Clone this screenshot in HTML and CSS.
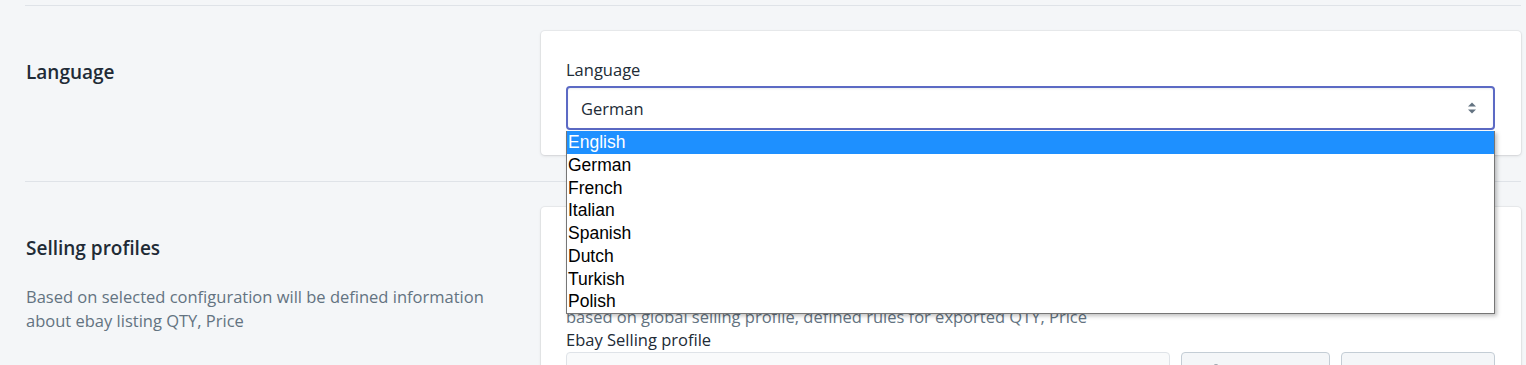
FILE: index.html
```html
<!DOCTYPE html>
<html lang="en">

<head>
    <meta charset="UTF-8">
    <meta name="viewport" content="width=device-width, initial-scale=1.0">
    <title>Settings</title>
    <link rel="stylesheet" href="styles.css">
</head>

<body>
    <div class="page">

        <section class="section">
            <div class="annotation">
                <h2>Language</h2>
            </div>
            <div class="card">
                <label class="field-label">Language</label>
                <div class="select focused">
                    <span>German</span>
                    <svg class="arrows" width="8" height="12" viewBox="0 0 8 12">
                        <path d="M0 4.5 L4 0.5 L8 4.5 Z M0 7.5 L8 7.5 L4 11.5 Z" fill="#637381" />
                    </svg>

                    <!-- open option list -->
                    <ul class="dropdown">
                        <li class="active">English</li>
                        <li>German</li>
                        <li>French</li>
                        <li>Italian</li>
                        <li>Spanish</li>
                        <li>Dutch</li>
                        <li>Turkish</li>
                        <li>Polish</li>
                    </ul>
                </div>
            </div>
        </section>

        <section class="section">
            <div class="annotation">
                <h2>Selling profiles</h2>
                <p class="description">Based on selected configuration will be defined information about ebay listing QTY, Price</p>
            </div>
            <div class="card">
                <label class="field-label">Selling profile type</label>
                <div class="select">
                    <span>Global selling profile</span>
                </div>
                <p class="help">based on global selling profile, defined rules for exported QTY, Price</p>
                <label class="field-label tight">Ebay Selling profile</label>
                <div class="input-row">
                    <div class="input"></div>
                    <button class="btn first">
                        <svg width="16" height="16" viewBox="0 0 16 16">
                            <circle cx="8" cy="5" r="3.5" fill="none" stroke="#454f5b" stroke-width="2" />
                            <path d="M2 15c0-3 3-5 6-5s6 2 6 5z" fill="#454f5b" />
                        </svg>
                        Change
                    </button>
                    <button class="btn second">
                        <svg width="16" height="16" viewBox="0 0 16 16">
                            <path d="M8 3v10M3 8h10" stroke="#919eab" stroke-width="2" />
                        </svg>
                        Create new
                    </button>
                </div>
            </div>
        </section>

    </div>
</body>

</html>
```

FILE: styles.css
```css
body {
    margin: 0;
    background: #f4f6f8;
    font-family: "Open Sans", "Noto Sans", sans-serif;
    font-size: 16.5px;
    color: #212b36;
}

.page {
    padding: 5px 5px 0 25px;
}

.section {
    display: grid;
    grid-template-columns: 496px 1fr;
    column-gap: 20px;
    border-top: 1px solid #dfe3e8;
    padding: 25px 0 26px;
}

/* Left side text */

.annotation {
    padding: 29px 0 0 1px;
}

.annotation h2 {
    margin: 0;
    font-size: 19px;
    font-weight: 600;
    line-height: 24px;
}

.description {
    margin: 25px 0 0;
    color: #637381;
    line-height: 24px;
}

/* Card */

.card {
    background: #fff;
    border-radius: 4px;
    box-shadow: 0 0 0 1px rgba(63, 63, 68, 0.05), 0 1px 3px 0 rgba(63, 63, 68, 0.15);
    padding: 27px 26px 25px 25px;
}

.field-label {
    display: block;
    line-height: 24px;
    margin-bottom: 4px;
}

.field-label.tight {
    margin-bottom: 0;
}

.select {
    position: relative;
    display: flex;
    align-items: center;
    justify-content: space-between;
    height: 44px;
    box-sizing: border-box;
    border: 1px solid #c4cdd5;
    border-radius: 4px;
    padding: 0 17px 0 14px;
}

.select.focused {
    border: 2px solid #5c6ac4;
    padding: 0 17px 0 13px;
    box-shadow: inset 0 1px 2px rgba(99, 115, 129, 0.12);
}

/* Native looking option list */

.dropdown {
    position: absolute;
    top: calc(100% + 3px);
    left: -2px;
    right: -2px;
    margin: 0;
    padding: 0;
    list-style: none;
    background: #fff;
    border: 1px solid #767676;
    border-top: 0;
    box-shadow: 2px 2px 4px rgba(0, 0, 0, 0.25);
    font-family: "Liberation Sans", Arial, sans-serif;
    font-size: 17.5px;
    color: #000;
    z-index: 5;
}

.dropdown li {
    height: 22.75px;
    line-height: 22.75px;
    padding-left: 1px;
}

.dropdown li.active {
    background: #1e90ff;
    color: #fff;
}

.help {
    margin: 0;
    color: #637381;
    line-height: 22px;
}

.input-row {
    display: flex;
    gap: 11px;
}

.input {
    flex: 1;
    height: 36px;
    border: 1px solid #dfe3e8;
    border-radius: 4px;
    background: #f9fafb;
}

.btn {
    display: flex;
    align-items: center;
    gap: 8px;
    height: 40px;
    border: 1px solid #c4cdd5;
    border-radius: 4px;
    background: #f4f6f8;
    font: inherit;
    color: #212b36;
}

.btn.first {
    width: 149px;
    padding: 0 0 0 26px;
}

.btn.second {
    width: 154px;
    padding: 0 0 0 19px;
}
```
